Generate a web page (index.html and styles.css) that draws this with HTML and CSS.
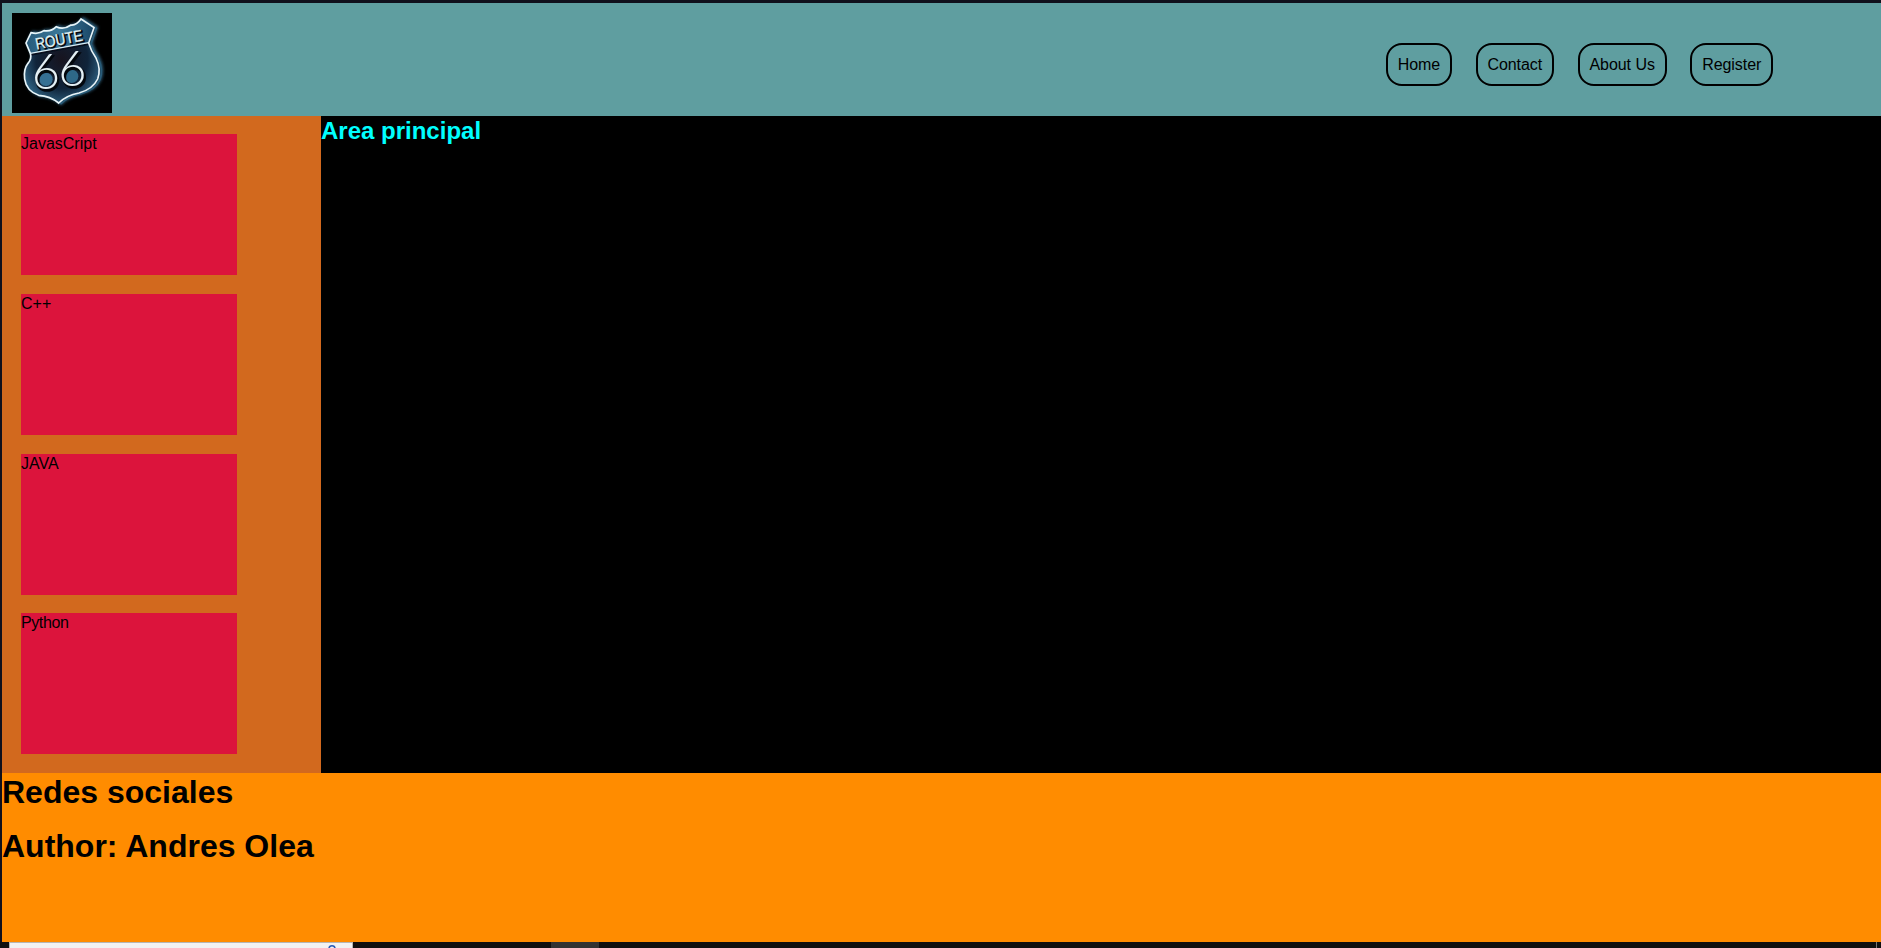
FILE: index.html
```html
<!DOCTYPE html>
<html lang="es">
<head>
<meta charset="utf-8">
<title>Route 66</title>
<link rel="stylesheet" href="styles.css">
</head>
<body>
<div class="page">
  <header class="header">
    <svg class="logo" viewBox="36 39 300 300" role="img" aria-label="Route 66">
      <defs>
        <radialGradient id="body-fill" cx="50%" cy="48%" r="58%">
          <stop offset="0" stop-color="#17141f"/>
          <stop offset=".6" stop-color="#10243a"/>
          <stop offset="1" stop-color="#32698a"/>
        </radialGradient>
        <linearGradient id="top-fill" x1="0" y1="0" x2="1" y2="0">
          <stop offset="0" stop-color="#285b7b"/>
          <stop offset=".5" stop-color="#3c7898"/>
          <stop offset="1" stop-color="#194666"/>
        </linearGradient>
        <filter id="glow" x="-20%" y="-20%" width="140%" height="140%"><feGaussianBlur stdDeviation="4"/></filter>
        <filter id="soft"><feGaussianBlur stdDeviation=".9"/></filter>
        <path id="shield" d="M78 129 L93 98 Q116 104 132 92 Q153 96 169 80 Q190 91 213 75 Q229 77 243 57 L282 83 L266 129 Q274 155 288 174 Q304 207 293 237 Q278 268 237 279 Q199 286 176 309 Q151 288 116 286 Q79 273 74 237 Q70 208 84 190 Q96 177 91 160 Z"/>
      </defs>
      <rect x="36" y="39" width="300" height="300" fill="#000"/>
      <use href="#shield" fill="none" stroke="#2d5f7c" stroke-width="10" transform="translate(7 0)" filter="url(#glow)"/>
      <use href="#shield" fill="none" stroke="#285b78" stroke-width="5" transform="translate(7 2)"/>
      <use href="#shield" fill="url(#body-fill)"/>
      <path d="M78 129 L93 98 Q116 104 132 92 Q153 96 169 80 Q190 91 213 75 Q229 77 243 57 L282 83 L266 129 L91 160 Z" fill="url(#top-fill)"/>
      <g filter="url(#soft)">
        <circle cx="138" cy="238" r="20" fill="#346f93"/>
        <circle cx="215" cy="229" r="20" fill="#2f6788"/>
        <path d="M91 164 L266 132" fill="none" stroke="#07111d" stroke-width="6"/>
        <path d="M91 160 L266 128" fill="none" stroke="#d9edf4" stroke-width="4"/>
        <use href="#shield" fill="none" stroke="#e8f5f9" stroke-width="5"/>
      </g>
      <g transform="rotate(-11 178 120)">
        <text class="logo-route logo-shadow" x="108" y="138" textLength="144" lengthAdjust="spacingAndGlyphs">ROUTE</text>
        <text class="logo-route" x="105" y="135" textLength="144" lengthAdjust="spacingAndGlyphs">ROUTE</text>
      </g>
      <g class="logo-numbers">
        <text class="logo-number logo-shadow" x="99 179" y="272 263">66</text>
        <text class="logo-number" x="95 175" y="268 259">66</text>
      </g>
    </svg>
    <nav class="nav">
      <a class="nav-link">Home</a>
      <a class="nav-link">Contact</a>
      <a class="nav-link">About Us</a>
      <a class="nav-link">Register</a>
    </nav>
  </header>
  <div class="content">
    <aside class="sidebar">
      <div class="card">JavasCript</div>
      <div class="card">C++</div>
      <div class="card">JAVA</div>
      <div class="card card-tight">Python</div>
    </aside>
    <main class="main"><h2 class="main-title">Area principal</h2></main>
  </div>
  <footer class="footer">
    <h1 class="footer-title">Redes sociales</h1>
    <h1 class="footer-title">Author: Andres Olea</h1>
  </footer>
</div>
<div class="taskbar">
  <div class="search"><svg class="search-icon" viewBox="0 0 10 4"><circle cx="5" cy="5" r="4" fill="none" stroke="#2859b5" stroke-width="2"/></svg></div>
  <div class="task"></div>
  <div class="desktop-edge"></div>
</div>
</body>
</html>
```
FILE: styles.css
```css
* { box-sizing: border-box; }
body {
  margin: 0;
  height: 948px;
  overflow: hidden;
  background: #101010;
  font: 16px/20px "Liberation Sans", Arial, sans-serif;
  color: #000;
}
.page {
  display: flex;
  flex-direction: column;
  height: 942px;
  border-top: 3px solid #10101c;
  border-left: 2px solid #10101c;
}
.header {
  display: flex;
  justify-content: space-between;
  height: 113px;
  padding: 10px 108px 0 10px;
  background: #5f9ea0;
}
.logo { display: block; width: 100px; height: 100px; }
.logo-route {
  font: 400 48px "Liberation Sans", Arial, sans-serif;
  fill: #e1f3f7;
  stroke: #e1f3f7;
  stroke-width: 1;
}
.logo-number {
  font: 300 146px Lato, "Liberation Sans", sans-serif;
  fill: #e4f0f4;
}
.logo-shadow { fill: #03080e; stroke: #03080e; stroke-width: 5; }
.nav { display: flex; align-items: flex-start; gap: 23.9px; padding-top: 30px; }
.nav-link {
  height: 43px;
  padding: 10px 9.7px 0;
  border: 2px solid #000;
  border-radius: 16px;
  letter-spacing: -.05px;
}
.content { display: flex; height: 657px; }
.sidebar {
  display: flex;
  flex-direction: column;
  gap: 18.6px;
  width: 319px;
  padding: 18.4px 19px 0;
  background: #d2691e;
}
.card { flex: none; width: 216px; height: 141px; background: #dc143c; }
.card-tight { letter-spacing: -.4px; }
.main { flex: 1; background: #000; }
.main-title { margin: 0; font-size: 24px; line-height: 29px; color: #0ff; }
.footer { flex: 1; background: #ff8c00; }
.footer-title { margin: 0 0 15px; font-size: 32px; line-height: 39px; }
.taskbar { display: flex; height: 6px; padding-left: 9px; background: #101010; }
.search {
  display: flex;
  justify-content: flex-end;
  width: 344px;
  padding: 2px 15px 0 0;
  border: solid #b5b5b5;
  border-width: 1px 1px 0;
  background: #f2f2f2;
}
.search-icon { width: 10px; height: 3px; }
.task { width: 48px; margin-left: 198px; background: #333; }
.desktop-edge { width: 1px; margin: 0 4px 0 auto; background: #777; }
```
